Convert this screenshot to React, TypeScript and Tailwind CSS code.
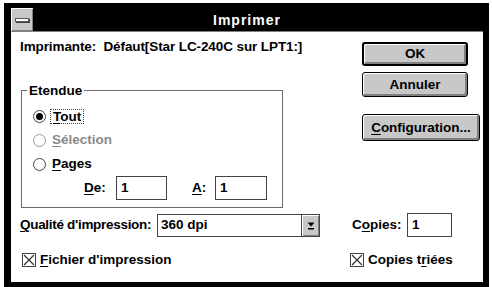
import type { ReactNode } from 'react'

function U({ children }: { children: ReactNode }) {
  return <span className="underline underline-offset-[2px] decoration-1">{children}</span>
}

function Btn({ children, def, className }: { children: ReactNode; def?: boolean; className: string }) {
  return (
    <div
      className={`${className} flex items-center justify-center rounded-[3px] border-black bg-[#c8c8c8] shadow-[inset_1px_1px_0_#fff,inset_-2px_-2px_0_#808080] ${
        def ? 'border-2' : 'border'
      }`}
    >
      {children}
    </div>
  )
}

function Radio({ checked, disabled }: { checked?: boolean; disabled?: boolean }) {
  return (
    <div
      className={`w-[13px] h-[13px] rounded-full border bg-white flex items-center justify-center ${
        disabled ? 'border-[#9a9a9a]' : 'border-[#444]'
      }`}
    >
      {checked && <div className="w-[7px] h-[7px] rounded-full bg-black" />}
    </div>
  )
}

function CheckX() {
  return (
    <svg width="14" height="14" viewBox="0 0 14 14" className="shrink-0">
      <rect x="0.5" y="0.5" width="13" height="13" fill="#fff" stroke="#444" />
      <path d="M2 2 L12 12 M12 2 L2 12" stroke="#333" strokeWidth="1.2" />
    </svg>
  )
}

export default function App() {
  return (
    <div className="w-[492px] h-[287px] bg-white overflow-hidden font-['Liberation_Sans',Arial,sans-serif] font-bold text-[13.5px] leading-[16px] text-black">
      <div className="ml-[4px] mt-[3px] w-[485px] h-[284px] bg-black pl-[7px] pr-[6px] pt-[5px] pb-[5px] flex flex-col">
        {/* Caption */}
        <div className="h-[24px] flex border-b border-[#808080] bg-black">
          <div className="w-[22px] h-[23px] bg-[#c8c8c8] flex items-center justify-center shadow-[inset_1px_1px_0_#fff,inset_-1px_-1px_0_#808080]">
            <div className="w-[14px] h-[4px] bg-white border border-[#555] shadow-[1px_1px_0_#444]" />
          </div>
          <div className="flex-1 flex items-center justify-center text-white text-[14px] tracking-[1px]">
            Imprimer
          </div>
          <div className="w-[22px]" />
        </div>

        {/* Body */}
        <div className="flex-1 bg-white pl-[9px] pr-[3px] flex flex-col">
          <div className="flex">
            <div className="w-[263px] flex flex-col">
              <div className="pt-[7px] whitespace-nowrap tracking-[-0.1px]">Imprimante:&nbsp; Défaut[Star LC-240C sur LPT1:]</div>
              <div className="mt-[35px] ml-[1px] h-[118px] relative border border-[#6a6a6a] pl-[11px] pt-[13px]">
                <span className="absolute left-[5px] top-[-8px] bg-white px-[2px]">Etendue</span>
                <div className="h-[24px] flex items-center">
                  <Radio checked />
                  <span className="ml-[4px] px-[2px] border border-dotted border-[#444] leading-[13px]">
                    <U>T</U>out
                  </span>
                </div>
                <div className="h-[24px] flex items-center text-[#8a8a8a]">
                  <Radio disabled />
                  <span className="ml-[6px]">
                    <U>S</U>élection
                  </span>
                </div>
                <div className="h-[24px] flex items-center">
                  <Radio />
                  <span className="ml-[6px]">
                    <U>P</U>ages
                  </span>
                </div>
                <div className="h-[24px] flex items-center pl-[51px]">
                  <span className="w-[32px]">
                    <U>D</U>e:
                  </span>
                  <div className="w-[51px] h-[24px] border border-[#444] flex items-center pl-[4px]">1</div>
                  <span className="ml-[25px] w-[23px]">
                    <U>A</U>:
                  </span>
                  <div className="w-[52px] h-[24px] border border-[#444] flex items-center pl-[4px]">1</div>
                </div>
              </div>
            </div>
            <div className="ml-[79px] pt-[10px] flex flex-col">
              <Btn def className="w-[106px] h-[24px]">OK</Btn>
              <Btn className="mt-[6px] w-[106px] h-[25px]">Annuler</Btn>
              <Btn className="mt-[17px] w-[118px] h-[27px]">
                <span>
                  <U>C</U>onfiguration...
                </span>
              </Btn>
            </div>
          </div>

          <div className="mt-[5px] h-[24px] flex items-center">
            <span className="w-[137px] whitespace-nowrap tracking-[-0.3px]">
              <U>Q</U>ualité d'impression:
            </span>
            <div className="w-[163px] h-[23px] flex border border-[#444] bg-white">
              <div className="flex-1 flex items-center pl-[3px]">360 dpi</div>
              <div className="w-[18px] h-full border-l border-[#444] bg-[#c8c8c8] shadow-[inset_1px_1px_0_#fff,inset_-1px_-1px_0_#808080] flex items-center justify-center">
                <svg width="8" height="10" viewBox="0 0 8 10">
                  <path d="M0.5 2.5 H7.5 L4 6.5 Z" fill="#000" />
                  <rect x="1" y="8" width="6" height="1.5" fill="#000" />
                </svg>
              </div>
            </div>
            <span className="ml-[32px] w-[55px]">
              C<U>o</U>pies:
            </span>
            <div className="w-[45px] h-[24px] border border-[#444] flex items-center pl-[4px]">1</div>
          </div>

          <div className="mt-[13px] h-[20px] flex items-center">
            <div className="w-[330px] flex items-center pl-[2px]">
              <CheckX />
              <span className="ml-[4px]">
                <U>F</U>ichier d'impression
              </span>
            </div>
            <CheckX />
            <span className="ml-[4px]">
              Copies t<U>r</U>iées
            </span>
          </div>
        </div>
      </div>
    </div>
  )
}
